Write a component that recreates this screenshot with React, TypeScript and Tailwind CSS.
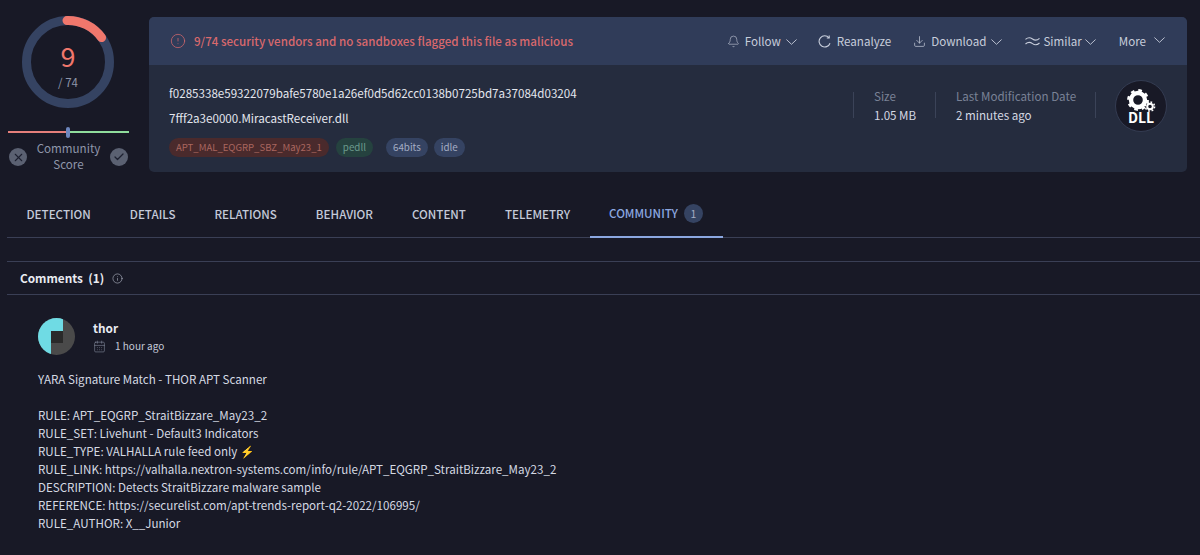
import React from "react";
import { Bell, Download, X, Check, CircleAlert, Info, CalendarDays } from "lucide-react";

const font = { fontFamily: '"Noto Sans CJK SC", "Noto Sans", sans-serif' };

function Gauge() {
  const cx = 68, cy = 62, r = 41.5;
  const a = (54 * Math.PI) / 180;
  const x = cx + r * Math.sin(a), y = cy - r * Math.cos(a);
  return (
    <div className="relative h-[108px] w-[122px]">
      <svg width="122" height="108" viewBox="8 0 122 108" className="absolute left-0 top-0">
        <circle cx={cx} cy={cy} r={r} fill="none" stroke="#354362" strokeWidth="9" />
        <path d={`M ${cx - 1} ${cy - r} A ${r} ${r} 0 0 1 ${x} ${y}`} fill="none" stroke="#f0776c" strokeWidth="9" strokeLinecap="round" />
      </svg>
      <div className="absolute left-0 top-[36px] w-[120px] text-center text-[27px] leading-[40px] text-[#f0776c]">9</div>
      <div className="absolute left-0 top-[73px] w-[120px] text-center text-[11.5px] leading-[18px] text-[#8f96aa]">/ 74</div>
    </div>
  );
}

function Community() {
  return (
    <div className="w-[122px]">
      <div className="flex h-[10px] items-center">
        <div className="h-[2px] w-[58px] bg-[#e57f7b]" />
        <div className="h-[11px] w-[4px] rounded-sm bg-[#6d86bd]" />
        <div className="h-[2px] w-[59px] bg-[#8fdc9c]" />
      </div>
      <div className="mt-[3px] flex items-center justify-between pl-[1px] pr-[2px]">
        <div className="mt-[2px] flex h-[18px] w-[18px] items-center justify-center rounded-full bg-[#5b6172]"><X size={13} color="#1d2030" strokeWidth={2} /></div>
        <div className="text-center text-[11.6px] leading-[16px] text-[#8f96aa]">Community<br />Score</div>
        <div className="mt-[2px] flex h-[18px] w-[18px] items-center justify-center rounded-full bg-[#5b6172]"><Check size={12} color="#1d2030" strokeWidth={2.5} /></div>
      </div>
    </div>
  );
}

function Chev({ className = "" }: { className?: string }) {
  return (
    <svg width="11" height="6" viewBox="0 0 11 6" fill="none" stroke="#c7cddb" strokeWidth="0.9" className={className}>
      <path d="M0.4 0.5 L5.5 5.3 L10.6 0.5" />
    </svg>
  );
}

function ReanalyzeIcon() {
  return (
    <svg width="13" height="13" viewBox="0 0 13 13" fill="none" stroke="#c7cddb" strokeWidth="1.1">
      <path d="M11 2.8 A5.6 5.6 0 1 0 12 8.2" />
      <path d="M11.2 0.4 V3 H8.8" />
    </svg>
  );
}

function SimilarIcon() {
  return (
    <svg width="15" height="10" viewBox="0 0 15 10" fill="none" stroke="#c7cddb" strokeWidth="1.1">
      <path d="M0.5 3.4 C3 1.2 5 1.2 7.5 3 S12 4.6 14.5 2.4" />
      <path d="M0.5 8 C3 5.8 5 5.8 7.5 7.6 S12 9.2 14.5 7" />
    </svg>
  );
}

function DllIcon() {
  return (
    <div className="flex h-[52px] w-[52px] flex-col items-center justify-center rounded-full border border-[#343c52] bg-[#181926]">
      <svg width="30" height="24" viewBox="0 0 30 24" className="mt-[1px]">
        <g fill="none" stroke="#ffffff">
          <circle cx="12" cy="11" r="7" strokeWidth="4.4" />
          <circle cx="12" cy="11" r="9.6" strokeWidth="2.6" strokeDasharray="3.6 3.94" />
          <circle cx="24" cy="17.5" r="2.8" strokeWidth="2" />
          <circle cx="24" cy="17.5" r="4.6" strokeWidth="1.5" strokeDasharray="1.8 1.8" />
        </g>
      </svg>
      <div className="-mt-[3px] text-[14px] font-bold leading-[14px] text-white">DLL</div>
    </div>
  );
}

function Action({ icon, label, chev = true, cls = "gap-[5px]" }: { icon?: React.ReactNode; label: string; chev?: boolean; cls?: string }) {
  return (
    <div className={`flex items-center ${cls} text-[11.6px] leading-[18px] text-[#c7cddb]`}>
      {icon}
      <span>{label}</span>
      {chev && <Chev className="mt-[1px]" />}
    </div>
  );
}

function Tag({ children, cls }: { children: React.ReactNode; cls: string }) {
  return <span className={`flex h-[19px] items-center rounded-full leading-[19px] ${cls}`}>{children}</span>;
}

function Panel() {
  return (
    <div className="ml-[19px] h-[155px] w-[1038px] overflow-hidden rounded-[5px] bg-[#252c3e]">
      <div className="flex h-[48px] items-center justify-between bg-[#303c59] pl-[21px] pr-[22px]">
        <div className="flex items-center gap-[8px] text-[11.6px] font-medium leading-[18px] text-[#d9696d]">
          <CircleAlert size={16} strokeWidth={1.1} />
          <span>9/74 security vendors and no sandboxes flagged this file as malicious</span>
        </div>
        <div className="flex items-center">
          <Action icon={<Bell size={13} strokeWidth={1.1} color="#c7cddb" />} label="Follow" />
          <Action icon={<ReanalyzeIcon />} label="Reanalyze" cls="ml-[21px] gap-[6px]" chev={false} />
          <Action icon={<Download size={13} strokeWidth={1.3} color="#c7cddb" />} label="Download" cls="ml-[22px] gap-[5px]" />
          <Action icon={<SimilarIcon />} label="Similar" cls="ml-[23px] gap-[3px]" />
          <div className="ml-[23px] flex items-center gap-[8px] text-[11.6px] leading-[18px] text-[#c7cddb]">
            <span>More</span>
            <Chev className="-mt-[3px]" />
          </div>
        </div>
      </div>
      <div className="flex justify-between pl-[20px] pr-[20px]">
        <div className="pt-[19px]">
          <div className="text-[11.6px] leading-[18px] text-[#e4e7ee]">f0285338e59322079bafe5780e1a26ef0d5d62cc0138b0725bd7a37084d03204</div>
          <div className="mt-[7px] text-[11.6px] leading-[18px] text-[#e4e7ee]">7fff2a3e0000.MiracastReceiver.dll</div>
          <div className="mt-[11px] flex items-center">
            <Tag cls="bg-[#4a2a2c] px-[7px] text-[9.55px] text-[#a9665f]">APT_MAL_EQGRP_SBZ_May23_1</Tag>
            <Tag cls="ml-[7px] bg-[#25423f] px-[7px] text-[9.8px] text-[#6b9a8c]">pedll</Tag>
            <Tag cls="ml-[13px] bg-[#354362] px-[7px] text-[9.8px] text-[#a4adc4]">64bits</Tag>
            <Tag cls="ml-[6px] bg-[#354362] px-[7px] text-[9.8px] text-[#a4adc4]">idle</Tag>
          </div>
        </div>
        <div className="flex items-start pt-[15px]">
          <div className="mt-[12px] flex h-[26px] items-center">
            <div className="h-[26px] w-px bg-[#3b4358]" />
            <div className="w-[81px] pl-[20px]">
              <div className="text-[11.6px] leading-[18px] text-[#7a8296]">Size</div>
              <div className="mt-[1px] text-[11.6px] leading-[18px] text-[#d5d9e3]">1.05 MB</div>
            </div>
            <div className="h-[26px] w-px bg-[#3b4358]" />
            <div className="w-[159px] pl-[20px]">
              <div className="text-[11.6px] leading-[18px] text-[#7a8296]">Last Modification Date</div>
              <div className="mt-[1px] text-[11.6px] leading-[18px] text-[#d5d9e3]">2 minutes ago</div>
            </div>
            <div className="h-[26px] w-px bg-[#3b4358]" />
          </div>
          <div className="ml-[19px]"><DllIcon /></div>
        </div>
      </div>
    </div>
  );
}

function Tabs() {
  const items = ["DETECTION", "DETAILS", "RELATIONS", "BEHAVIOR", "CONTENT", "TELEMETRY"];
  return (
    <div className="ml-[7px] mt-[17px] flex h-[49px] border-b border-[#3a3f55]">
      {items.map((t) => (
        <div key={t} className="flex items-center px-[19.5px] pt-[3px] text-[11.6px] font-medium text-[#c4cad9]">{t}</div>
      ))}
      <div className="flex h-[49px] w-[133px] items-center gap-[6px] border-b-2 border-[#8ba7e0] pl-[19.5px] pt-[3px] text-[11.6px] font-medium text-[#8ba7e0]">
        COMMUNITY
        <span className="-mt-[1px] flex h-[19px] w-[19px] items-center justify-center rounded-full bg-[#354362] text-[10.5px] font-normal text-[#a4adc4]">1</span>
      </div>
    </div>
  );
}

function Avatar() {
  return (
    <div className="relative h-[37px] w-[37px] overflow-hidden rounded-full bg-[#4a4a4a]">
      <div className="h-[37px] w-[13px] bg-[#6fdbe4]" />
      <div className="absolute left-[13px] top-0 h-[13px] w-[12px] bg-[#6fdbe4]" />
      <div className="absolute left-[13px] top-[13px] h-[12px] w-[12px] bg-[#2a2a2a]" />
    </div>
  );
}

export default function App() {
  const lines = [
    "RULE: APT_EQGRP_StraitBizzare_May23_2",
    "RULE_SET: Livehunt - Default3 Indicators",
    "RULE_TYPE: VALHALLA rule feed only ⚡",
    "RULE_LINK: https://valhalla.nextron-systems.com/info/rule/APT_EQGRP_StraitBizzare_May23_2",
    "DESCRIPTION: Detects StraitBizzare malware sample",
    "REFERENCE: https://securelist.com/apt-trends-report-q2-2022/106995/",
    "RULE_AUTHOR: X__Junior",
  ];
  return (
    <div className="h-[555px] w-[1200px] overflow-hidden bg-[#181926]" style={font}>
      <div className="flex pl-[8px] pt-[17px]">
        <div className="-mt-[17px] w-[122px]">
          <Gauge />
          <div className="mt-[19px]"><Community /></div>
        </div>
        <Panel />
      </div>
      <Tabs />
      <div className="ml-[7px] mt-[23px] flex h-[34px] items-center gap-[8px] border-y border-[#3a3f55] pl-[13px] text-[11.8px] font-bold text-[#e9ebf1]">
        <span>Comments&nbsp; (1)</span>
        <Info size={11} strokeWidth={1.2} color="#c4cad9" />
      </div>
      <div className="pl-[38px] pt-[23px]">
        <div className="flex">
          <Avatar />
          <div className="ml-[18px] pt-[1px]">
            <div className="text-[11.8px] font-bold leading-[18px] text-[#e9ebf1]">thor</div>
            <div className="mt-[1px] flex items-center gap-[9px] text-[10px] leading-[16px] text-[#c4cad9]">
              <CalendarDays size={13} strokeWidth={1} color="#8f96aa" />
              <span>1 hour ago</span>
            </div>
          </div>
        </div>
        <div className="mt-[15px] text-[11.6px] leading-[18px] text-[#d5d9e3]">
          <div>YARA Signature Match - THOR APT Scanner</div>
          <div className="h-[18px]" />
          {lines.map((l) => <div key={l}>{l}</div>)}
        </div>
      </div>
    </div>
  );
}
